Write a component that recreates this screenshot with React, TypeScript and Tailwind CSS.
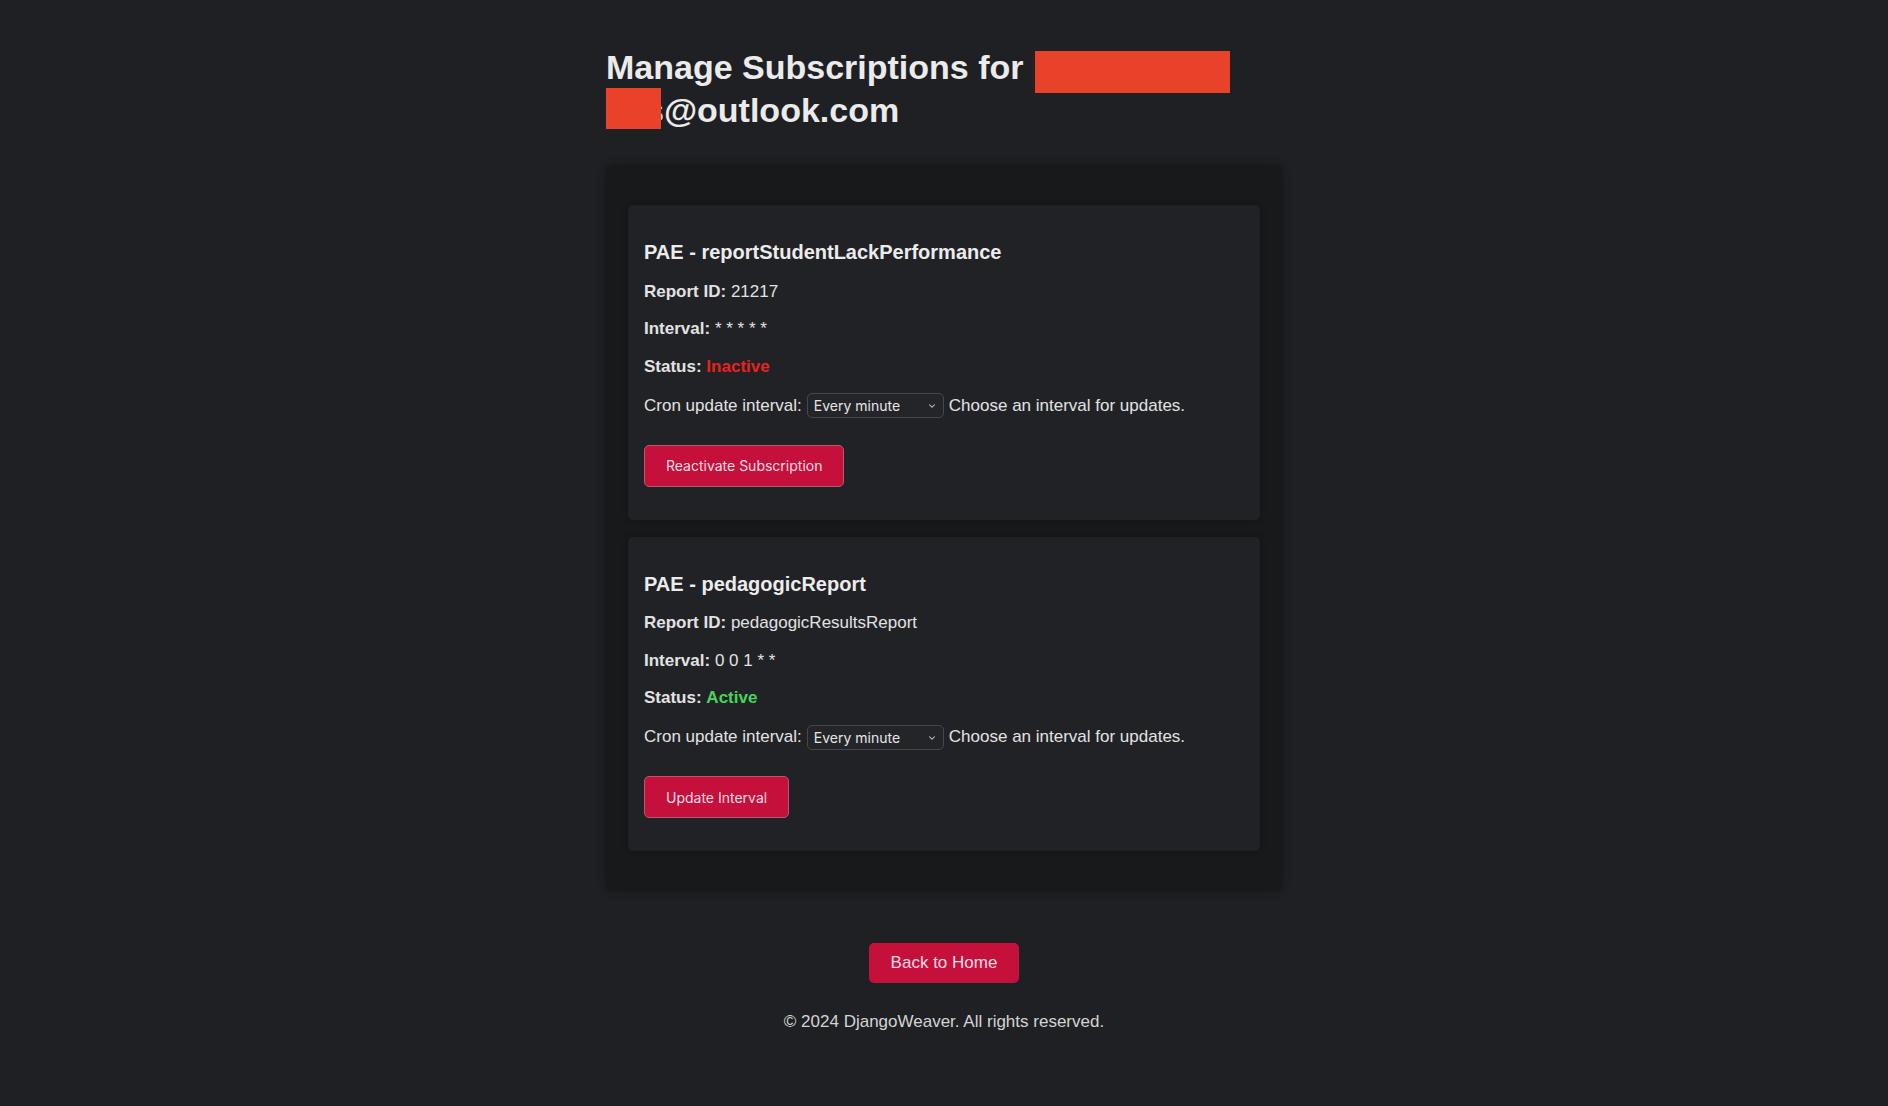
import { ChevronDown } from "lucide-react";

interface Subscription {
  title: string;
  reportId: string;
  interval: string;
  active: boolean;
  action: string;
}

const subscriptions: Subscription[] = [
  {
    title: "PAE - reportStudentLackPerformance",
    reportId: "21217",
    interval: "* * * * *",
    active: false,
    action: "Reactivate Subscription",
  },
  {
    title: "PAE - pedagogicReport",
    reportId: "pedagogicResultsReport",
    interval: "0 0 1 * *",
    active: true,
    action: "Update Interval",
  },
];

function IntervalSelect() {
  return (
    <span className="relative mx-[5px] inline-block h-[25px] w-[137px] align-middle">
      <select className="h-full w-full appearance-none rounded-[5px] border border-[#45474c] bg-[#232529] pl-[6px] font-['Inter',sans-serif] text-[14px] text-[#e6e6e6] outline-none">
        <option>Every minute</option>
        <option>Every hour</option>
        <option>Every day</option>
        <option>Every week</option>
      </select>
      <ChevronDown
        className="pointer-events-none absolute right-[7px] top-[8px] text-[#cfcfcf]"
        size={10}
        strokeWidth={2.5}
      />
    </span>
  );
}

function SubscriptionCard({ sub }: { sub: Subscription }) {
  return (
    <div className="rounded-[5px] bg-[#202226] px-4 pb-[33px] pt-[36px] shadow-[0_0_6px_rgba(0,0,0,0.25)]">
      <h3 className="text-[20px] font-bold leading-[23px] text-[#ececec]">{sub.title}</h3>
      <p className="mt-[17.5px] leading-5">
        <span className="font-bold">Report ID:</span> {sub.reportId}
      </p>
      <p className="mt-[17.5px] leading-5">
        <span className="font-bold">Interval:</span> {sub.interval}
      </p>
      <p className="mt-[17.5px] leading-5">
        <span className="font-bold">Status:</span>{" "}
        {sub.active ? (
          <span className="font-bold text-[#45d659]">Active</span>
        ) : (
          <span className="font-bold text-[#e8221e]">Inactive</span>
        )}
      </p>
      <div className="mt-[16.5px] flex h-[25px] items-center">
        <span>Cron update interval:</span>
        <IntervalSelect />
        <span>Choose an interval for updates.</span>
      </div>
      <button className="mt-[26.5px] h-[42px] rounded-[5px] border border-[#b8566b] bg-[#c6103c] px-[21px] font-['Inter',sans-serif] text-[14px] text-[#f7dde4]">
        {sub.action}
      </button>
    </div>
  );
}

export default function App() {
  return (
    <div className="min-h-[1106px] bg-[#1f2023] pt-[46px] font-['Liberation_Sans',Arial,sans-serif] text-[17px] text-[#e2e2e2]">
      <div className="mx-auto w-[676px]">
        <h1 className="relative text-[34px] font-bold leading-[43px] text-[#ebebeb]">
          Manage Subscriptions for
          <br />
          <span className="inline-block w-[39px]" />
          s@outlook.com
          <span className="absolute left-[429px] top-[5px] h-[42px] w-[195px] bg-[#e9422a]" />
          <span className="absolute left-0 top-[42px] h-[41px] w-[55px] bg-[#e9422a]" />
        </h1>

        <div className="mt-[34px] flex flex-col gap-[17px] rounded-[6px] bg-[#18191b] px-[22px] pb-[39px] pt-[39px] shadow-[0_0_10px_rgba(0,0,0,0.35)]">
          {subscriptions.map((sub) => (
            <SubscriptionCard key={sub.reportId} sub={sub} />
          ))}
        </div>
      </div>

      <div className="mt-[53px] flex flex-col items-center">
        <a
          href="#"
          className="flex h-[40px] items-center rounded-[5px] bg-[#c6103c] px-[22px] text-[17px] text-[#f7dde4]"
        >
          Back to Home
        </a>
        <p className="mt-[29px] leading-5 text-[#d4d4d4]">© 2024 DjangoWeaver. All rights reserved.</p>
      </div>
    </div>
  );
}
